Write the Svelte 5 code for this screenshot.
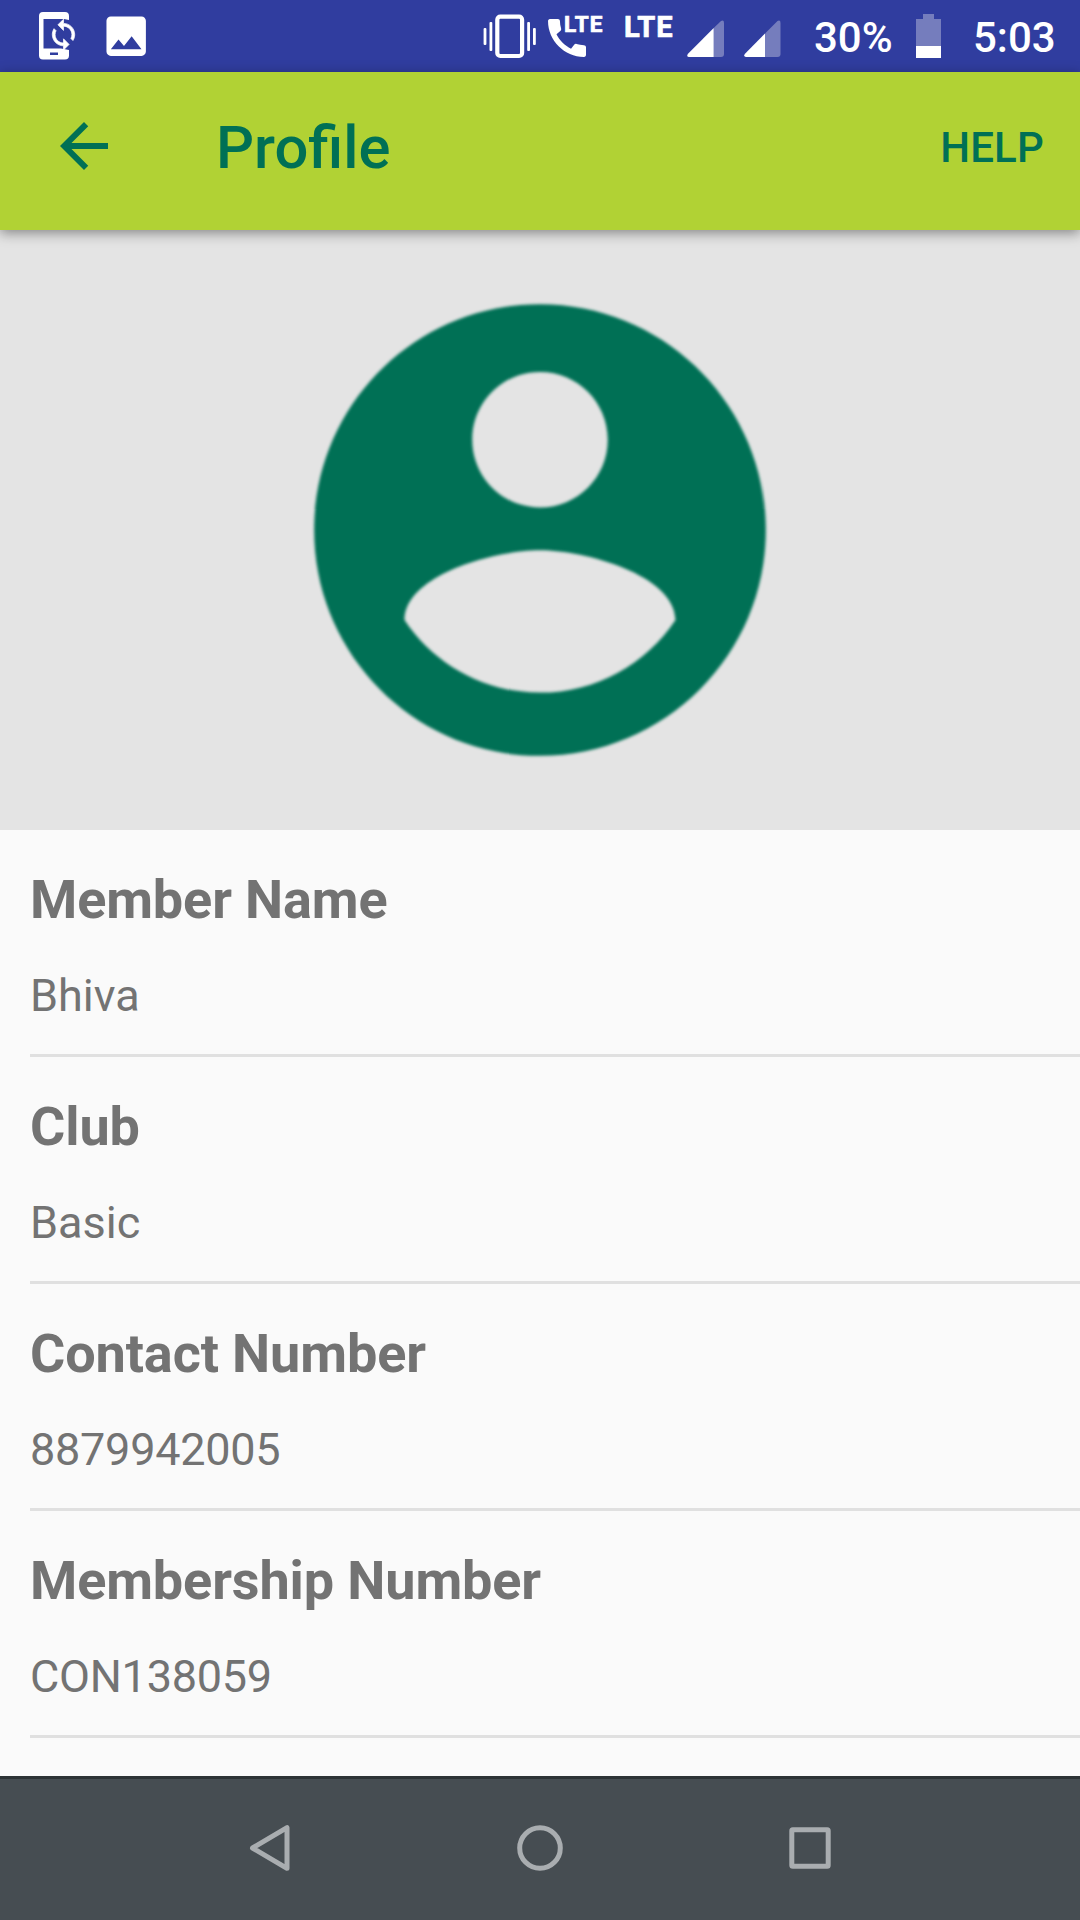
<script>
  const fields = [
    { label: 'Member Name', value: 'Bhiva' },
    { label: 'Club', value: 'Basic' },
    { label: 'Contact Number', value: '8879942005', numeric: true },
    { label: 'Membership Number', value: 'CON138059', numeric: true },
  ];
</script>

<div class="screen">
  <div class="status">
    <!-- screen sync -->
    <svg class="sync" viewBox="36 0 42 72">
      <path fill-rule="evenodd" d="M43 12H65Q69 12 69 16V20L64 19H43.5V48.5H61L69 50V55.500Q69 59.500 65 59.500H43Q39 59.500 39 55.500V16Q39 12 43 12ZM50 52.500V55H58V52.500Z" />
      <path transform="translate(46.700 17.800) scale(1.400)" d="M12 4V1L8 5l4 4V6c3.310 0 6 2.690 6 6 0 1.010-.25 1.970-.7 2.800l1.460 1.460C19.540 15.030 20 13.570 20 12c0-4.420-3.580-8-8-8zm0 14c-3.310 0-6-2.690-6-6 0-1.010.25-1.970.7-2.800L5.240 7.740C4.460 8.970 4 10.430 4 12c0 4.420 3.580 8 8 8v3l4-4-4-4v3z" stroke="#fff" stroke-width="0.500" />
    </svg>
    <!-- picture -->
    <svg class="picture" viewBox="106 0 42 72">
      <path transform="translate(99.900 9.900) scale(2.190)" d="M21 19V5c0-1.100-.9-2-2-2H5c-1.100 0-2 .9-2 2v14c0 1.100.9 2 2 2h14c1.100 0 2-.9 2-2zM8.500 13.500l2.500 3.010L14.500 12l4.500 6H5l3.500-4.500z" />
    </svg>
    <span class="spacer"></span>
    <!-- vibrate -->
    <svg class="vibrate" viewBox="482 0 56 72">
      <rect x="497.300" y="16.700" width="24.800" height="39.300" rx="3" fill="none" stroke="#fff" stroke-width="4.200" />
      <rect x="489.500" y="22" width="2.800" height="29" rx="1" />
      <rect x="483.600" y="28" width="2.800" height="17" rx="1" />
      <rect x="527.200" y="22" width="2.800" height="29" rx="1" />
      <rect x="533" y="28" width="2.800" height="17" rx="1" />
    </svg>
    <!-- call over LTE -->
    <svg class="volte" viewBox="546 0 60 72">
      <path transform="translate(541.700 12.700) scale(2.110)" d="M20.010 15.380c-1.230 0-2.420-.2-3.530-.56-.35-.12-.74-.03-1.010.24l-1.570 1.970c-2.830-1.350-5.480-3.900-6.890-6.830l1.950-1.660c.27-.28.35-.67.24-1.020-.37-1.110-.56-2.300-.56-3.530 0-.54-.45-.99-.99-.99H4.190C3.650 3 3 3.240 3 3.990 3 13.280 10.730 21 20.010 21c.71 0 .99-.63.99-1.180v-3.450c0-.54-.45-.99-.99-.99z" />
      <text class="lte" x="564" y="32" font-size="22.500" textLength="38.500">LTE</text>
    </svg>
    <svg class="network" viewBox="622 0 54 72">
      <text class="lte" x="624" y="36.700" font-size="29" textLength="48.500">LTE</text>
    </svg>
    <svg class="signal" viewBox="686 0 40 72">
      <path class="dim" d="M713.700 28L721 21Q724 19.500 724 23V54Q724 57 721 57H713.700Z" />
      <path d="M713.700 28V57H689Q686 56.500 688 53.700Z" />
    </svg>
    <svg class="signal second" viewBox="743 0 40 72">
      <path class="dim" d="M765 33.500L777.500 21Q780.500 19.500 780.500 23V54Q780.500 57 777.500 57H765Z" />
      <path d="M765 33.500V57H746Q743 56.500 745 53.700Z" />
    </svg>
    <span class="percent">30%</span>
    <svg class="battery" viewBox="914 0 30 72">
      <path class="dim" d="M923 14H934V19H941V46H916V19H923Z" />
      <path d="M916 46H941V58H916Z" />
    </svg>
    <span class="clock">5:03</span>
  </div>

  <header class="bar">
    <svg class="back" viewBox="0 0 24 24">
      <path d="M20 11H7.830l5.590-5.590L12 4l-8 8 8 8 1.410-1.410L7.830 13H20v-2z" />
    </svg>
    <h1>Profile</h1>
    <span class="help">HELP</span>
  </header>

  <div class="hero">
    <svg class="avatar" viewBox="0 0 24 24">
      <path d="M12 2C6.480 2 2 6.480 2 12s4.480 10 10 10 10-4.480 10-10S17.520 2 12 2zm0 3c1.660 0 3 1.340 3 3s-1.340 3-3 3-3-1.340-3-3 1.340-3 3-3zm0 14.200c-2.500 0-4.710-1.280-6-3.220.03-1.990 4-3.080 6-3.080 1.990 0 5.970 1.090 6 3.080-1.290 1.940-3.500 3.220-6 3.220z" />
    </svg>
  </div>

  <main>
    {#each fields as field}
      <section>
        <h2>{field.label}</h2>
        <p class:numeric={field.numeric}>{field.value}</p>
      </section>
    {/each}
  </main>

  <nav>
    <svg viewBox="0 0 60 60"><path d="M47 9.700V50.300L12.500 30Z" /></svg>
    <svg viewBox="0 0 60 60"><circle cx="30" cy="30" r="20.300" /></svg>
    <svg viewBox="0 0 60 60"><rect x="11.800" y="11.800" width="36.400" height="36.400" rx="1" /></svg>
  </nav>
</div>

<style>
  :global(body) {
    margin: 0;
  }
  .screen {
    width: 1080px;
    height: 1920px;
    display: flex;
    flex-direction: column;
    overflow: hidden;
    background: #fafafa;
    font-family: Roboto, sans-serif;
  }
  svg {
    display: block;
    flex: none;
  }
  .status {
    height: 72px;
    flex: none;
    display: flex;
    box-sizing: border-box;
    padding: 0 24px 0 36px;
    background: #303d9f;
    color: #fff;
    font-size: 42px;
    font-weight: 500;
    line-height: 75px;
  }
  .status svg {
    height: 72px;
    fill: #fff;
  }
  .status .dim {
    fill: #757dbd;
  }
  .spacer {
    flex: 1;
  }
  .sync {
    width: 42px;
  }
  .picture {
    width: 42px;
    margin-left: 28px;
  }
  .vibrate {
    width: 56px;
  }
  .volte {
    width: 60px;
    margin-left: 8px;
  }
  .network {
    width: 54px;
    margin-left: 16px;
  }
  .signal {
    width: 40px;
    margin-left: 10px;
  }
  .signal.second {
    margin-left: 17px;
  }
  .lte {
    font-weight: 700;
    stroke: #fff;
    stroke-width: 0.7px;
  }
  .percent {
    width: 100px;
    margin-left: 31px;
  }
  .battery {
    width: 30px;
  }
  .clock {
    width: 83px;
    margin-left: 29px;
  }
  .bar {
    position: relative;
    height: 158px;
    flex: none;
    display: flex;
    align-items: center;
    box-sizing: border-box;
    padding: 0 36px 10px 48px;
    background: #b1d234;
    color: #007055;
    box-shadow: 0 3px 12px rgba(0, 0, 0, 0.42);
  }
  .back {
    width: 72px;
    height: 72px;
    fill: #007055;
  }
  h1 {
    flex: 1;
    margin: 4px 0 0 96px;
    font-size: 59.7px;
    font-weight: 500;
    line-height: 70px;
  }
  .help {
    padding-top: 4px;
    font-size: 42px;
    font-weight: 500;
    line-height: 50px;
    letter-spacing: 0.2px;
  }
  .hero {
    height: 600px;
    flex: none;
    display: flex;
    align-items: center;
    justify-content: center;
    background: #e4e4e4;
  }
  .avatar {
    width: 542px;
    height: 542px;
    fill: #007055;
    filter: blur(1.8px);
  }
  main {
    flex: 1;
    padding-left: 30px;
  }
  section {
    box-sizing: border-box;
    height: 227px;
    padding-top: 38px;
    border-bottom: 3px solid #e0e0e0;
    color: #737373;
  }
  h2 {
    margin: 0;
    font-size: 54px;
    font-weight: 700;
    line-height: 63px;
    letter-spacing: -0.12px;
  }
  p {
    margin: 38px 0 0;
    font-size: 45px;
    line-height: 53px;
  }
  .numeric {
    letter-spacing: -0.25px;
  }
  nav {
    height: 144px;
    flex: none;
    box-sizing: border-box;
    border-top: 3px solid #2d3336;
    padding: 0 240px 3px;
    display: flex;
    align-items: center;
    justify-content: space-between;
    background: #464d52;
  }
  nav svg {
    width: 60px;
    height: 60px;
    fill: none;
    stroke: #a9adb0;
    stroke-width: 5;
    stroke-linejoin: round;
  }
</style>
